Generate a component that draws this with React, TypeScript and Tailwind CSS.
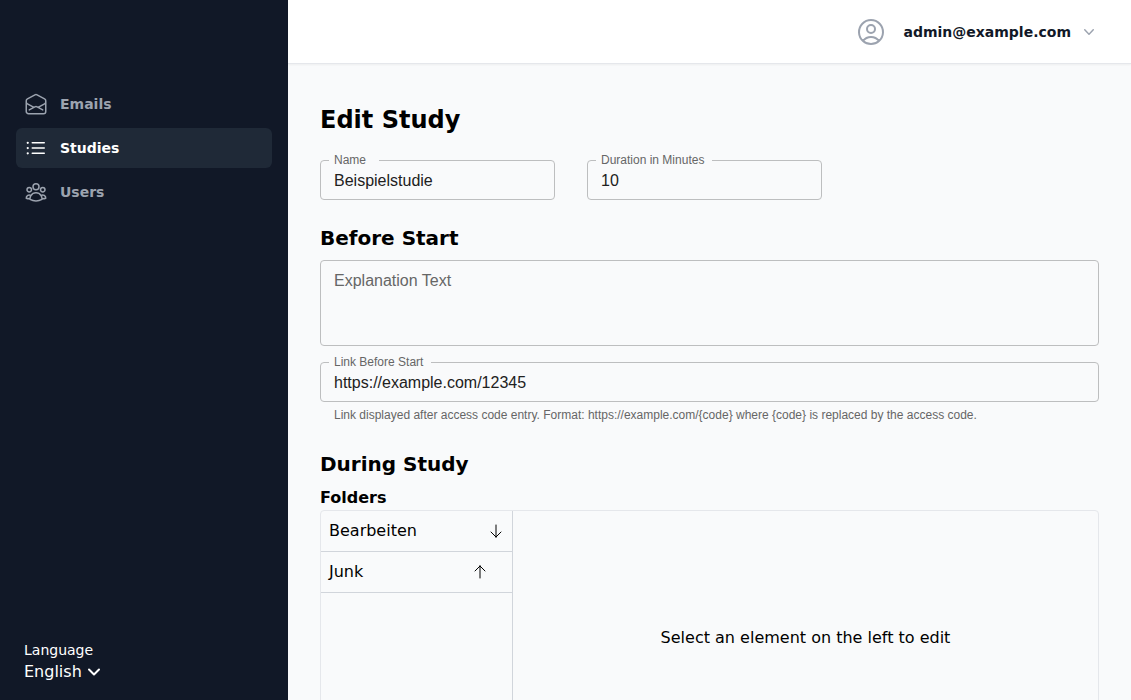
import { useState, type ReactNode } from 'react';
import type { IconType } from 'react-icons';
import {
  HiOutlineArrowDown,
  HiOutlineArrowUp,
  HiOutlineEnvelopeOpen,
  HiOutlineListBullet,
  HiOutlineUserCircle,
  HiOutlineUserGroup,
} from 'react-icons/hi2';

type NavItem = { name: string; icon: IconType; current?: boolean };

const navigation: NavItem[] = [
  { name: 'Emails', icon: HiOutlineEnvelopeOpen },
  { name: 'Studies', icon: HiOutlineListBullet, current: true },
  { name: 'Users', icon: HiOutlineUserGroup },
];

function Sidebar() {
  return (
    <aside className="sticky top-0 flex h-screen w-72 shrink-0 flex-col justify-between bg-[#111827] px-4 pt-21 pb-4">
      <nav>
        <ul className="flex flex-col gap-1">
          {navigation.map(({ name, icon: Icon, current }) => (
            <li key={name}>
              <a
                href={`#${name.toLowerCase()}`}
                aria-current={current ? 'page' : undefined}
                className={
                  current
                    ? 'flex gap-3 rounded-md bg-[#1f2937] p-2 text-sm leading-6 font-semibold text-white'
                    : 'flex gap-3 rounded-md p-2 text-sm leading-6 font-semibold text-[#9ca3af]'
                }
              >
                <Icon className="size-6 shrink-0" aria-hidden="true" />
                {name}
              </a>
            </li>
          ))}
        </ul>
      </nav>
      <div className="flex flex-col items-start px-2 text-white">
        <label htmlFor="language" className="text-sm">
          Language
        </label>
        <div className="relative">
          <select
            id="language"
            defaultValue="English"
            className="block [field-sizing:content] appearance-none bg-transparent pr-5 text-base text-white outline-none"
          >
            <option>English</option>
            <option>Deutsch</option>
          </select>
          <svg
            viewBox="0 0 24 24"
            fill="none"
            stroke="currentColor"
            strokeWidth="3"
            strokeLinecap="round"
            strokeLinejoin="round"
            aria-hidden="true"
            className="pointer-events-none absolute top-1 right-0 size-4"
          >
            <path d="m19.5 8.25-7.5 7.5-7.5-7.5" />
          </svg>
        </div>
      </div>
    </aside>
  );
}

function TopBar() {
  return (
    <header className="sticky top-0 z-10 flex h-16 items-center justify-end border-b border-[#e5e7eb] bg-white px-8 shadow-[0_1px_2px_0_rgb(0_0_0/0.05)]">
      <button type="button" className="flex items-center">
        <HiOutlineUserCircle className="size-8 text-[#9ca3af]" aria-hidden="true" />
        <span className="ml-4 text-sm leading-6 font-semibold text-[#111827]">admin@example.com</span>
        <svg viewBox="0 0 20 20" fill="currentColor" className="ml-2 size-5 text-[#9ca3af]" aria-hidden="true">
          <path
            fillRule="evenodd"
            clipRule="evenodd"
            d="M5.23 7.21a.75.75 0 011.06.02L10 11.168l3.71-3.938a.75.75 0 111.08 1.04l-4.25 4.5a.75.75 0 01-1.08 0l-4.25-4.5a.75.75 0 01.02-1.06z"
          />
        </svg>
      </button>
    </header>
  );
}

type FieldProps = {
  id: string;
  label: string;
  value: string;
  className?: string;
  required?: boolean;
  type?: string;
};

function OutlinedField({ id, label, value, className = '', required = false, type = 'text' }: FieldProps) {
  const [text, setText] = useState(value);
  return (
    <div className={`relative font-['Liberation_Sans',sans-serif] ${className}`}>
      <input
        id={id}
        type={type}
        required={required}
        value={text}
        onChange={(event) => setText(event.target.value)}
        className="block h-10 w-full rounded-sm border border-[#bdbebf] bg-transparent px-[13px] pt-0.5 text-base text-[#212121] outline-none focus:border-blue-600"
      />
      <label
        htmlFor={id}
        className={
          required
            ? 'absolute -top-2 left-[9px] bg-[#f9fafb] pr-[13px] pl-[5px] text-xs text-[#666666]'
            : 'absolute -top-2 left-[9px] bg-[#f9fafb] pr-2 pl-[5px] text-xs text-[#666666]'
        }
      >
        {label}
      </label>
    </div>
  );
}

function SectionTitle({ children }: { children: ReactNode }) {
  return <h2 className="mt-6 text-xl font-bold">{children}</h2>;
}

const folders = ['Bearbeiten', 'Junk'];

function FolderEditor() {
  return (
    <div className="flex min-h-64 rounded-sm border border-[#e5e7eb]">
      <ul className="w-48 shrink-0 border-r border-[#d1d5db]">
        {folders.map((folder, index) => (
          <li key={folder} className="flex items-center border-b border-[#d1d5db] p-2">
            <button type="button" className="grow text-left">
              {folder}
            </button>
            <div className="grid grid-cols-2">
              {index > 0 && (
                <button type="button" aria-label={`Move ${folder} up`} className="col-start-1">
                  <HiOutlineArrowUp className="size-4" />
                </button>
              )}
              <span className="size-4" />
              {index < folders.length - 1 && (
                <button type="button" aria-label={`Move ${folder} down`} className="col-start-2">
                  <HiOutlineArrowDown className="size-4" />
                </button>
              )}
            </div>
          </li>
        ))}
      </ul>
      <p className="flex grow items-center justify-center">Select an element on the left to edit</p>
    </div>
  );
}

export default function App() {
  return (
    <div className="flex min-h-screen bg-[#f9fafb] font-['DejaVu_Sans',sans-serif] text-black">
      <Sidebar />
      <div className="min-w-0 grow">
        <TopBar />
        <main className="px-8 py-10">
          <h1 className="text-2xl font-bold">Edit Study</h1>
          <div className="mt-6 flex flex-wrap gap-8">
            <OutlinedField id="name" label="Name" value="Beispielstudie" required className="w-[235px]" />
            <OutlinedField id="duration" label="Duration in Minutes" value="10" className="w-[235px]" />
          </div>

          <SectionTitle>Before Start</SectionTitle>
          <textarea
            aria-label="Explanation Text"
            placeholder="Explanation Text"
            rows={3}
            className="mt-2 block w-full resize-none rounded-sm border border-[#bdbebf] bg-transparent px-[13px] pt-2 pb-1 font-['Liberation_Sans',sans-serif] text-base text-[#212121] outline-none placeholder:text-[#666666] focus:border-blue-600"
          />
          <OutlinedField id="link" label="Link Before Start" value="https://example.com/12345" className="mt-4" />
          <p className="mt-1 px-3.5 pb-0.5 font-['Liberation_Sans',sans-serif] text-xs leading-[18px] text-[#666666]">
            Link displayed after access code entry. Format: https://example.com/{'{code}'} where {'{code}'} is replaced
            by the access code.
          </p>

          <SectionTitle>During Study</SectionTitle>
          <h3 className="mt-2 font-bold">Folders</h3>
          <FolderEditor />
        </main>
      </div>
    </div>
  );
}
